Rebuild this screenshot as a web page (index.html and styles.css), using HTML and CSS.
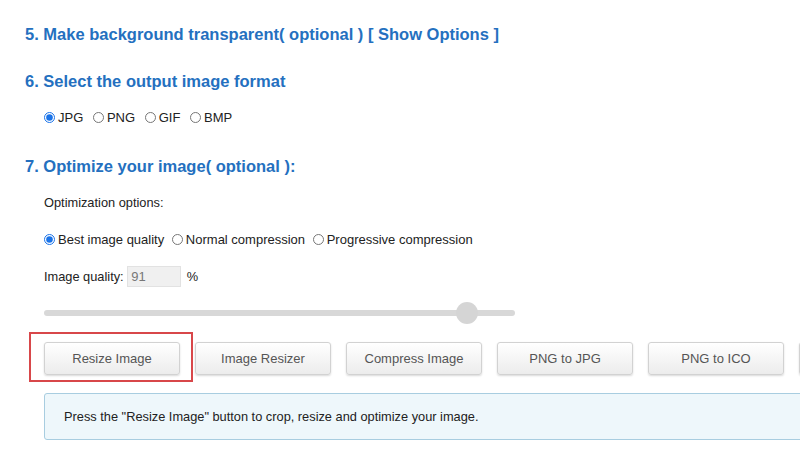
FILE: index.html
```html
<!DOCTYPE html>
<html>

<head>
	<meta charset="UTF-8">
	<title>Image options</title>
	<link rel="stylesheet" href="styles.css">
</head>

<body>
	<div class="page">
		<h2 class="stepTitle first">5. Make background transparent( optional ) <a class="toggleLink">[ Show Options ]</a></h2>

		<h2 class="stepTitle">6. Select the output image format</h2>
		<div class="step formatRow">
			<label><input type="radio" name="format" checked>JPG</label>
			<label><input type="radio" name="format">PNG</label>
			<label><input type="radio" name="format">GIF</label>
			<label><input type="radio" name="format">BMP</label>
		</div>

		<h2 class="stepTitle optimizeTitle">7. Optimize your image( optional ):</h2>
		<div class="step">
			<div class="optLabel">Optimization options:</div>
			<div class="optRow">
				<label><input type="radio" name="optimize" checked>Best image quality</label>
				<label><input type="radio" name="optimize">Normal compression</label>
				<label><input type="radio" name="optimize">Progressive compression</label>
			</div>
			<div class="qualityRow">
				Image quality: <input type="text" id="quality" value="91"> %
			</div>
			<input type="range" id="qualitySlider" min="0" max="100" step="0.1" value="91.7">
			<div class="buttonRow">
				<a class="toolButton highlighted">Resize Image</a>
				<a class="toolButton">Image Resizer</a>
				<a class="toolButton">Compress Image</a>
				<a class="toolButton">PNG to JPG</a>
				<a class="toolButton">PNG to ICO</a>
				<a class="toolButton" aria-label="JPG to PNG"></a>
			</div>
			<div class="infoBox">Press the "Resize Image" button to crop, resize and optimize your image.</div>
		</div>
	</div>
</body>

</html>
```

FILE: styles.css
```css
html, body {
	margin: 0;
	overflow: hidden;
	background: #ffffff;
}
body {
	font-family: Arial, "Liberation Sans", Helvetica, sans-serif;
	font-size: 13px;
	color: #222;
}
.page {
	width: 1000px;
	padding-left: 25px;
}
.stepTitle {
	font-size: 16.5px;
	line-height: 22px;
	font-weight: bold;
	color: #2470bf;
	margin: 25px 0 0 0;
}
.stepTitle.first {
	margin-top: 23px;
}
.stepTitle.optimizeTitle {
	margin-top: 28px;
}
.toggleLink {
	color: #2470bf;
	cursor: pointer;
}
.step {
	padding-left: 19px;
}
.formatRow {
	margin-top: 17px;
	line-height: 18px;
}
.formatRow label {
	margin-right: 6px;
	white-space: nowrap;
}
.optRow label {
	margin-right: 4px;
	white-space: nowrap;
}
input[type=radio] {
	width: 11px;
	height: 11px;
	margin: 0 3px 0 0;
	vertical-align: -1px;
	accent-color: #1a73e8;
}
.optLabel {
	margin-top: 17px;
	line-height: 18px;
	font-size: 12.8px;
}
.optRow {
	margin-top: 19px;
	line-height: 18px;
}
.qualityRow {
	margin-top: 17px;
	line-height: 21px;
	height: 21px;
	font-size: 12.8px;
}
#quality {
	width: 46px;
	height: 19px;
	box-sizing: content-box;
	padding: 0 3px;
	margin: 0 2px 0 0;
	border: 1px solid #e2e2e2;
	background: #f0f0f0;
	color: #777;
	font-family: inherit;
	font-size: 13px;
	vertical-align: top;
}
#qualitySlider {
	-webkit-appearance: none;
	appearance: none;
	display: block;
	width: 471px;
	height: 22px;
	margin: 15px 0 0 0;
	padding: 0;
	background: transparent;
}
#qualitySlider::-webkit-slider-runnable-track {
	height: 6px;
	border-radius: 3px;
	background: #d8d8d8;
}
#qualitySlider::-webkit-slider-thumb {
	-webkit-appearance: none;
	width: 22px;
	height: 22px;
	margin-top: -8px;
	border-radius: 50%;
	background: #d5d5d5;
	border: none;
}
.buttonRow {
	display: flex;
	gap: 15px;
	margin-top: 18px;
}
.toolButton {
	position: relative;
	flex: 0 0 136px;
	box-sizing: border-box;
	height: 33px;
	line-height: 31px;
	text-align: center;
	color: #555;
	font-size: 13px;
	background: linear-gradient(#ffffff, #ececec);
	border: 1px solid #d2d2d2;
	border-radius: 3px;
	box-shadow: 0 1px 2px rgba(0, 0, 0, 0.15);
	cursor: pointer;
}
.toolButton.highlighted::after {
	content: "";
	position: absolute;
	top: -11px;
	left: -16px;
	right: -14px;
	bottom: -8px;
	border: 2px solid #d8474a;
}
.infoBox {
	margin-top: 18px;
	box-sizing: border-box;
	height: 47px;
	line-height: 45px;
	padding-left: 19px;
	font-size: 12.8px;
	background: #eef7fb;
	border: 1px solid #a8cde0;
	border-radius: 3px;
	color: #222;
}
```
